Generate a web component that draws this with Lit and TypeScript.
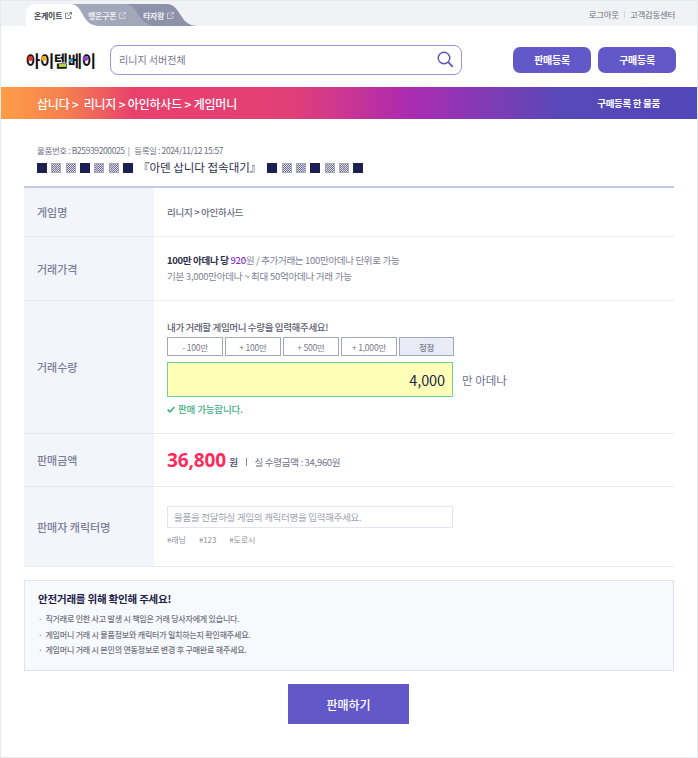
import { LitElement, html, css } from "lit";
import { customElement } from "lit/decorators.js";

const extIcon = html`<svg class="ext" width="7" height="7" viewBox="0 0 7 7" fill="none" stroke="currentColor" stroke-width="0.8"><path d="M3 1.2H.5v5.3h5.3V4"/><path d="M2.8 4.2 6.4.6M4.3.5h2.2v2.2"/></svg>`;

const solid = html`<i class="sq solid"></i>`;
const hatch = html`<i class="sq hatch"></i>`;
const squares = html`<span class="squares">${solid}${hatch}${hatch}${solid}${hatch}${hatch}${solid}</span>`;

@customElement("app-root")
export class AppRoot extends LitElement {
  static styles = css`
    :host {
      display: block;
      width: 698px;
      height: 758px;
      box-sizing: border-box;
      background: #fff;
      border: 1px solid #e8e9ee;
      font-family: "Noto Sans CJK KR", "Noto Sans", sans-serif;
      color: #6c6f85;
      overflow: hidden;
      letter-spacing: -0.3px;
    }
    * { box-sizing: border-box; }
    .top {
      height: 25px;
      background: #f1f2f6;
      display: flex;
      justify-content: space-between;
      align-items: flex-end;
      padding-left: 25px;
      padding-right: 22px;
    }
    .tabs { height: 22px; position: relative; width: 170px; }
    .tabshape { position: absolute; left: 0; top: 0; }
    .tabtext {
      position: absolute;
      top: 3.5px;
      font-size: 8px;
      font-weight: 700;
      line-height: 15px;
      display: flex;
      align-items: center;
      gap: 3px;
      white-space: nowrap;
      color: #eceef4;
    }
    .tabtext.on { color: #3d3f4c; left: 8px; }
    .tabtext.b { left: 62px; }
    .tabtext.c { left: 117px; }
    .ext { opacity: .8; }
    .util {
      align-self: center;
      display: flex;
      align-items: center;
      gap: 5px;
      font-size: 8.5px;
      color: #6d6e78;
      margin-top: 1px;
    }
    .util i { width: 1px; height: 7px; background: #d5d6dc; }

    .header {
      height: 61px;
      display: flex;
      align-items: center;
      padding: 6px 21px 0 24px;
    }
    .logo {
      width: 85px;
      font-size: 15.5px;
      font-weight: 700;
      color: #111;
      letter-spacing: -0.35px;
      position: relative;
      line-height: 20px;
      white-space: nowrap;
      padding-left: 1px;
    }
    .dot { position: absolute; width: 5px; height: 5px; border-radius: 50%; top: 6px; }
    .dot.red { left: 2.5px; background: #e8352c; }
    .dot.orange { left: 15.5px; background: #f5a623; }
    .dot.green { left: 34px; top: 14.5px; width: 7px; height: 2.5px; border-radius: 0; background: #b4d334; }
    .dot.blue { left: 44px; top: 9px; width: 4px; height: 3px; border-radius: 0; background: #2a8fe0; }
    .dot.purple { left: 58.2px; background: #8b3fd9; }
    .search {
      width: 352px;
      height: 30px;
      border: 1px solid #9b93de;
      border-radius: 8px;
      display: flex;
      align-items: center;
      justify-content: space-between;
      padding: 0 7px 0 8px;
      font-size: 10px;
      color: #75778a;
      letter-spacing: 0;
    }
    .hbtns { margin-left: auto; display: flex; gap: 7px; }
    .hbtn {
      width: 78px;
      height: 26px;
      border-radius: 7px;
      background: #6358c8;
      color: #fff;
      font-size: 10px;
      font-weight: 700;
      display: flex;
      align-items: center;
      justify-content: center;
    }

    .banner {
      height: 32px;
      background: linear-gradient(90deg, #ff9d46 0%, #f5814f 9%, #e8416c 19%, #e23f78 42%, #ae2bb0 58%, #5a48b8 80%, #5147b8 100%);
      color: #fff;
      display: flex;
      align-items: center;
      justify-content: space-between;
      padding: 0 37px 0 36px;
      font-weight: 700;
    }
    .banner .crumb { font-size: 12px; font-weight: 500; letter-spacing: -0.2px; white-space: pre; }
    .banner .side { font-size: 9.5px; }

    .main { padding: 0 23px; }
    .meta {
      margin-top: 25px;
      padding-left: 13px;
      font-size: 8.5px;
      line-height: 12px;
      color: #6e7080;
      letter-spacing: -0.38px;
      white-space: pre;
    }
    .title {
      margin-top: 2px;
      padding-left: 13px;
      height: 28px;
      display: flex;
      align-items: flex-start;
      font-size: 11.5px;
      line-height: 18px;
      color: #2d2f4e;
      letter-spacing: 0;
    }
    .title .t { margin: 0 6px 0 5px; white-space: nowrap; }
    .squares { display: flex; gap: 4.33px; padding-top: 5px; }
    .sq { display: block; width: 10px; height: 9.5px; }
    .solid { background: #1c1e54; }
    .hatch {
      background: repeating-conic-gradient(#70718f 0 25%, #dcdce6 0 50%) 0 0 / 2px 2px;
      outline: 1px solid #a7a8bd;
      outline-offset: -1px;
    }

    .row {
      display: grid;
      grid-template-columns: 130px 1fr;
      border-bottom: 1px solid #e9eaee;
    }
    .row.first { border-top: 2px solid #c3c9e2; }
    .label {
      background: #f3f5fb;
      padding-left: 13px;
      display: flex;
      align-items: center;
      font-size: 11px;
      font-weight: 500;
      color: #7b7f98;
      letter-spacing: 0;
    }
    .val { padding-left: 13px; font-size: 9.5px; }
    .r1 { height: 51px; }
    .r1 .val { display: flex; align-items: center; font-size: 9.5px; color: #6b6d80; font-weight: 500; }
    .r2 { height: 64px; }
    .r2 .val { padding-top: 16px; line-height: 15.5px; color: #7d7f95; letter-spacing: -0.25px; }
    .r2 .l1 { letter-spacing: -0.32px; }
    .r2 b { color: #2d2f45; font-weight: 700; }
    .r2 em { font-style: normal; color: #8a33c8; font-weight: 500; }
    .r3 { height: 133px; }
    .r3 .val { padding-top: 19px; }
    .ask { font-size: 9.5px; line-height: 14px; font-weight: 500; color: #5a5c6e; letter-spacing: -0.35px; }
    .steps { display: flex; gap: 2px; margin-top: 3px; width: 286px; }
    .step {
      flex: 0 0 56px;
      height: 19px;
      border: 1px solid #a4a5b8;
      font-size: 8.5px;
      color: #77798c;
      display: flex;
      align-items: center;
      justify-content: center;
      background: #fff;
      letter-spacing: -0.2px;
    }
    .step.fix { background: #e9ecf6; flex: 0 0 55px; font-weight: 500; }
    .amount { display: flex; align-items: center; gap: 9px; margin-top: 6px; }
    .box {
      width: 286px;
      height: 35px;
      background: #ffffb8;
      border: 1px solid #72cf95;
      display: flex;
      align-items: center;
      justify-content: flex-end;
      padding-right: 7px;
      font-size: 14.5px;
      color: #24264a;
      letter-spacing: -0.1px;
    }
    .unit { font-size: 11.5px; color: #6e7088; letter-spacing: 0; }
    .ok {
      margin-top: 5px;
      display: flex;
      align-items: center;
      gap: 3px;
      font-size: 9.5px;
      font-weight: 500;
      line-height: 14px;
      color: #3dae84;
      letter-spacing: -0.15px;
    }
    .r4 { height: 53px; }
    .r4 .val { display: flex; align-items: center; }
    .price { font-size: 19px; font-weight: 700; color: #ff2a5c; font-family: "Open Sans", "Noto Sans", sans-serif; letter-spacing: -0.1px; }
    .won { margin-left: 3px; margin-top: 3px; font-size: 9.5px; font-weight: 700; color: #60627a; }
    .bar { margin: 3px 8px 0; width: 1px; height: 8px; background: #8a8ca0; }
    .net { margin-top: 3px; font-size: 9.5px; color: #6f7188; letter-spacing: -0.3px; }
    .r5 { height: 80px; }
    .r5 .val { padding-top: 19px; }
    .charinput {
      width: 286px;
      height: 22px;
      border: 1px solid #e3e5f0;
      padding-left: 6px;
      display: flex;
      align-items: center;
      font-size: 9.5px;
      color: #a0a2b2;
      letter-spacing: -0.28px;
    }
    .tags { margin-top: 5px; display: flex; gap: 13px; font-size: 8px; line-height: 13px; color: #8f91a0; letter-spacing: -0.1px; }

    .notice {
      margin-top: 13px;
      height: 91px;
      background: #f8f9fc;
      border: 1px solid #dfe3ee;
      padding: 10px 13px;
    }
    .notice h3 {
      margin: 0 0 4px;
      font-size: 10.5px;
      font-weight: 700;
      line-height: 16px;
      color: #1d1f4a;
      letter-spacing: -0.2px;
    }
    .notice ul { margin: 0; padding: 0; list-style: none; }
    .notice li {
      display: flex;
      gap: 3px;
      font-size: 8px;
      line-height: 15.5px;
      color: #6f7182;
      font-weight: 500;
      letter-spacing: -0.2px;
    }
    .submit-wrap { display: flex; justify-content: center; margin-top: 13px; padding-right: 1px; }
    .submit {
      width: 121px;
      height: 40px;
      background: #6358c8;
      color: #fff;
      font-size: 12px;
      font-weight: 500;
      display: flex;
      align-items: center;
      justify-content: center;
      letter-spacing: -0.1px;
    }
  `;

  render() {
    return html`
      <div class="top">
        <div class="tabs">
          <svg class="tabshape" width="172" height="22" viewBox="0 0 172 22">
            <path d="M90 0H140C150 0 152 8 156 13C159 18 163 21 170 22H60Z" fill="#8e92a8"/>
            <path d="M40 0H98C108 0 110 8 114 13C117 18 122 21 128 22H50Z" fill="#a3a7ba"/>
            <path d="M10 0H44C52 0 54 6 57 11C60 17 64 21 72 22H0V10C0 4 4 0 10 0Z" fill="#fff"/>
          </svg>
          <span class="tabtext on">온게이트 ${extIcon}</span>
          <span class="tabtext b">행운구폰 ${extIcon}</span>
          <span class="tabtext c">타자왕 ${extIcon}</span>
        </div>
        <div class="util"><span>로그아웃</span><i></i><span>고객감동센터</span></div>
      </div>

      <div class="header">
        <div class="logo">아이템베이
          <span class="dot red"></span>
          <span class="dot orange"></span>
          <span class="dot green"></span>
          <span class="dot blue"></span>
          <span class="dot purple"></span>
        </div>
        <div class="search">
          <span>리니지 서버전체</span>
          <svg width="17" height="17" viewBox="0 0 17 17" fill="none" stroke="#5d54b8" stroke-width="1.4"><circle cx="7" cy="7" r="5.8"/><path d="M11.2 11.2 15.8 15.8" stroke-width="1.8"/></svg>
        </div>
        <div class="hbtns"><div class="hbtn">판매등록</div><div class="hbtn">구매등록</div></div>
      </div>

      <div class="banner">
        <span class="crumb">삽니다 &gt;  리니지 &gt; 아인하사드 &gt; 게임머니</span>
        <span class="side">구매등록 한 물품</span>
      </div>

      <div class="main">
        <div class="meta">물품번호 : B25939200025  |   등록일 : 2024/11/12 15:57</div>
        <div class="title">${squares}<span class="t">『아덴 삽니다 접속대기』</span>${squares}</div>

        <div class="row first r1">
          <div class="label">게임명</div>
          <div class="val">리니지 &gt; 아인하사드</div>
        </div>
        <div class="row r2">
          <div class="label">거래가격</div>
          <div class="val">
            <div class="l1"><b>100만 아데나 당</b> <em>920</em>원 / 추가거래는 100만아데나 단위로 가능</div>
            <div>기본 3,000만아데나 ~ 최대 50억아데나 거래 가능</div>
          </div>
        </div>
        <div class="row r3">
          <div class="label">거래수량</div>
          <div class="val">
            <div class="ask">내가 거래할 게임머니 수량을 입력해주세요!</div>
            <div class="steps">
              <div class="step">- 100만</div>
              <div class="step">+ 100만</div>
              <div class="step">+ 500만</div>
              <div class="step">+ 1,000만</div>
              <div class="step fix">정정</div>
            </div>
            <div class="amount"><div class="box">4,000</div><span class="unit">만 아데나</span></div>
            <div class="ok">
              <svg width="8" height="7" viewBox="0 0 8 7" fill="none" stroke="#3dae84" stroke-width="1.6"><path d="M.6 3.6 3 5.8 7.4 1"/></svg>
              판매 가능합니다.
            </div>
          </div>
        </div>
        <div class="row r4">
          <div class="label">판매금액</div>
          <div class="val">
            <span class="price">36,800</span><span class="won">원</span><i class="bar"></i><span class="net">실 수령금액 : 34,960원</span>
          </div>
        </div>
        <div class="row r5">
          <div class="label">판매자 캐릭터명</div>
          <div class="val">
            <div class="charinput">물품을 전달하실 게임의 캐릭터명을 입력해주세요.</div>
            <div class="tags"><span>#래닝</span><span>#123</span><span>#도로시</span></div>
          </div>
        </div>

        <div class="notice">
          <h3>안전거래를 위해 확인해 주세요!</h3>
          <ul>
            <li><span>·</span>직거래로 인한 사고 발생 시 책임은 거래 당사자에게 있습니다.</li>
            <li><span>·</span>게임머니 거래 시 물품정보와 캐릭터가 일치하는지 확인해주세요.</li>
            <li><span>·</span>게임머니 거래 시 본인의 연동정보로 변경 후 구매완료 해주세요.</li>
          </ul>
        </div>
        <div class="submit-wrap"><div class="submit">판매하기</div></div>
      </div>
    `;
  }
}
